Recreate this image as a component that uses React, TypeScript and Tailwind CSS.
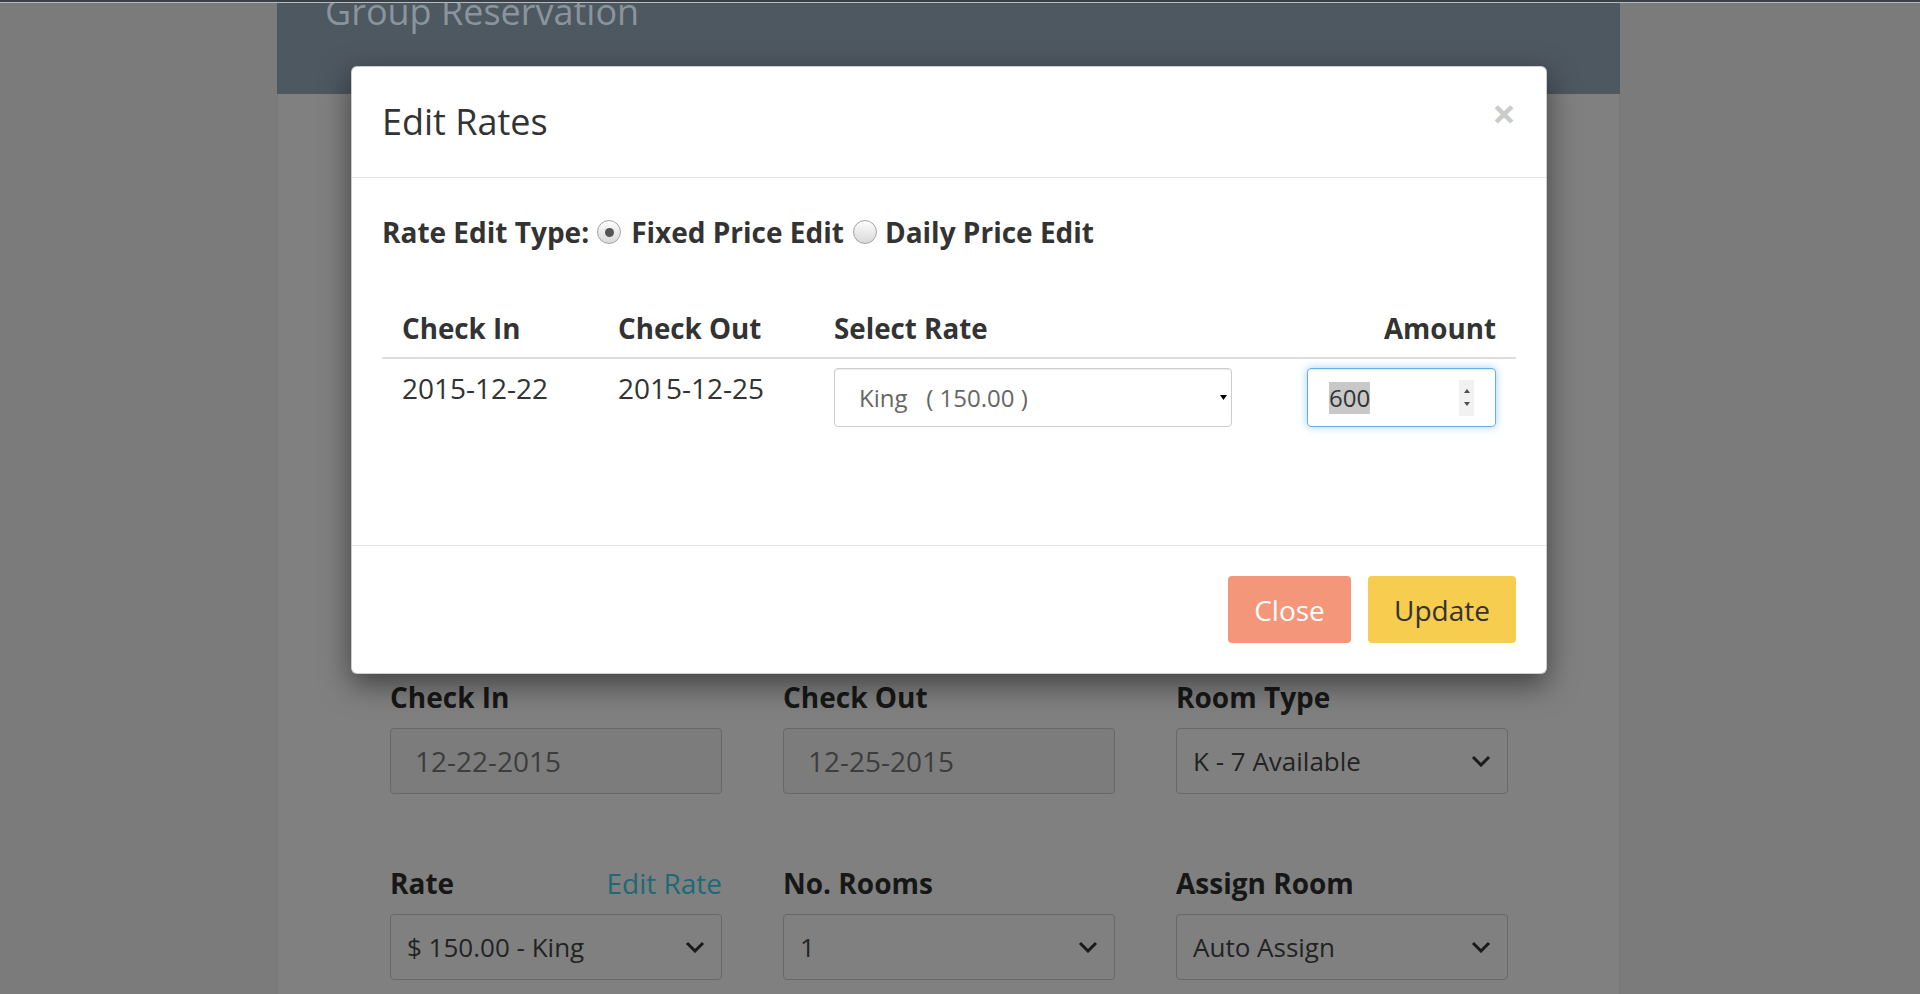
import React from "react";

function Chevron() {
  return (
    <svg width="20" height="12" viewBox="0 0 20 12" fill="none" className="shrink-0">
      <path d="M2 2L10 10L18 2" stroke="#1a1a1a" strokeWidth="3" />
    </svg>
  );
}

function Radio({ checked }: { checked?: boolean }) {
  return (
    <span className="flex h-[24px] w-[24px] shrink-0 items-center justify-center rounded-full border border-[#a3a3a3] bg-linear-to-b from-[#fdfdfd] to-[#d9d9d9]">
      {checked && <span className="h-[9px] w-[9px] rounded-full bg-[#555555]" />}
    </span>
  );
}

function Field({ label, right, children }: { label: string; right?: React.ReactNode; children: React.ReactNode }) {
  return (
    <div>
      <div className="mb-[11px] flex items-baseline justify-between text-[28px] leading-[40px]">
        <span className="font-bold text-[#171717]">{label}</span>
        {right}
      </div>
      {children}
    </div>
  );
}

function BgInput({ value }: { value: string }) {
  return (
    <div className="flex h-[66px] items-center rounded-[4px] border border-[#686868] bg-[#7c7c7c] pl-[24px] text-[28px] text-[#3d3d3d]">
      {value}
    </div>
  );
}

function BgSelect({ value }: { value: string }) {
  return (
    <div className="flex h-[66px] items-center justify-between rounded-[4px] border border-[#686868] bg-[#808080] pl-[16px] pr-[16px] text-[26px] text-[#232323]">
      <span>{value}</span>
      <Chevron />
    </div>
  );
}

export default function App() {
  return (
    <div className="relative h-[994px] w-[1920px] overflow-hidden bg-[#7b7b7b] font-['Open_Sans',sans-serif]">
      <div className="relative z-10 h-[2px] bg-[#3b4046]" />
      <div className="relative z-10 h-[1px] bg-[#b3bcc5]" />
      <div className="ml-[277px] w-[1343px]">
        <div className="flex h-[91px] items-start bg-[#4e5861] pl-[48px]">
          <div className="-mt-[9px] text-[36px] leading-[36px] text-[#8b949c]">Group Reservation</div>
        </div>
        <div className="h-[900px] border-x border-[#777777] bg-[#808080] pl-[112px] pt-[583px]">
          <div className="grid w-[1118px] grid-cols-3 gap-x-[61px]">
            <Field label="Check In">
              <BgInput value="12-22-2015" />
            </Field>
            <Field label="Check Out">
              <BgInput value="12-25-2015" />
            </Field>
            <Field label="Room Type">
              <BgSelect value="K - 7 Available" />
            </Field>
          </div>
          <div className="mt-[69px] grid w-[1118px] grid-cols-3 gap-x-[61px]">
            <Field label="Rate" right={<span className="text-[#1d6a76]">Edit Rate</span>}>
              <BgSelect value="$ 150.00 - King" />
            </Field>
            <Field label="No. Rooms">
              <BgSelect value="1" />
            </Field>
            <Field label="Assign Room">
              <BgSelect value="Auto Assign" />
            </Field>
          </div>
        </div>
      </div>

      <div className="absolute left-[351px] top-[66px] w-[1196px] rounded-[6px] border border-black/20 bg-white text-[#333333] shadow-[0_10px_30px_rgba(0,0,0,0.5)]">
        <div className="flex h-[111px] items-start justify-between border-b border-[#e5e5e5] px-[30px] pt-[29px]">
          <h4 className="text-[36px] font-normal leading-[51px]">Edit Rates</h4>
          <span className="-mt-[4px] text-[42px] font-bold leading-none text-black opacity-20">×</span>
        </div>
        <div className="h-[367px] px-[30px] pt-[34px]">
          <div className="flex h-[40px] items-center text-[28px] font-bold leading-[40px]">
            <span>Rate Edit Type:</span>
            <span className="ml-[8px]">
              <Radio checked />
            </span>
            <span className="ml-[10px]">Fixed Price Edit</span>
            <span className="ml-[9px]">
              <Radio />
            </span>
            <span className="ml-[8px]">Daily Price Edit</span>
          </div>
          <div className="mt-[47px]">
            <div className="grid grid-cols-[216px_216px_438px_1fr] border-b-2 border-[#dddddd] text-[27.75px] font-bold leading-[40px]">
              <div className="px-[20px] py-[9px]">Check In</div>
              <div className="px-[20px] py-[9px]">Check Out</div>
              <div className="px-[20px] py-[9px]">Select Rate</div>
              <div className="px-[20px] py-[9px] text-right">Amount</div>
            </div>
            <div className="grid grid-cols-[216px_216px_438px_1fr] text-[28px] leading-[40px]">
              <div className="px-[20px] py-[9px]">2015-12-22</div>
              <div className="px-[20px] py-[9px]">2015-12-25</div>
              <div className="px-[20px] py-[9px]">
                <div className="flex h-[59px] items-center justify-between rounded-[4px] border border-[#cccccc] pl-[24px] pr-[4px] text-[24px] text-[#666666] shadow-[inset_0_1px_1px_rgba(0,0,0,0.075)]">
                  <span className="whitespace-pre">{"King   ( 150.00 )"}</span>
                  <svg width="7" height="5" viewBox="0 0 7 5">
                    <path d="M0 0H7L3.5 5Z" fill="#000" />
                  </svg>
                </div>
              </div>
              <div className="flex justify-end px-[20px] py-[9px]">
                <div className="flex h-[59px] w-[189px] items-center justify-between rounded-[4px] border border-[#66afe9] pl-[21px] pr-[21px] shadow-[inset_0_1px_1px_rgba(0,0,0,0.075),0_0_8px_rgba(102,175,233,0.6)]">
                  <span className="bg-[#c8c8c8] text-[24px] leading-[32px] text-[#333333]">600</span>
                  <span className="flex h-[36px] w-[15px] flex-col items-center justify-center gap-[9px] bg-[#f1f1f1]">
                    <svg width="6" height="4" viewBox="0 0 6 4">
                      <path d="M0 4H6L3 0Z" fill="#4d4d4d" />
                    </svg>
                    <svg width="6" height="4" viewBox="0 0 6 4">
                      <path d="M0 0H6L3 4Z" fill="#4d4d4d" />
                    </svg>
                  </span>
                </div>
              </div>
            </div>
          </div>
        </div>
        <div className="flex h-[128px] items-center justify-end gap-[17px] border-t border-[#e5e5e5] px-[30px]">
          <button className="flex h-[67px] w-[123px] items-center justify-center rounded-[4px] bg-[#f4967a] text-[28px] text-white">
            Close
          </button>
          <button className="flex h-[67px] w-[148px] items-center justify-center rounded-[4px] bg-[#f7cd4f] text-[28px] text-[#333333]">
            Update
          </button>
        </div>
      </div>
    </div>
  );
}
